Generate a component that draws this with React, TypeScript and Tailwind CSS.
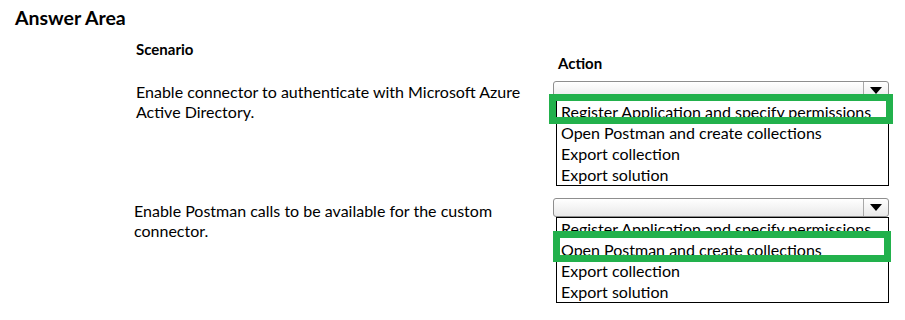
const font = { fontFamily: '"Lato", "Liberation Sans", sans-serif' };

const actions = [
  'Register Application and specify permissions',
  'Open Postman and create collections',
  'Export collection',
  'Export solution',
];

type DropProps = { frame: string };

const ActionDrop = ({ frame }: DropProps) => (
  <div className="relative w-[337px]">
    <div className="flex h-[19px] w-[336px] rounded-[3px] border border-[#8e8e8e] bg-gradient-to-b from-white to-[#e9e9e9]">
      <div className="flex-1" />
      <div className="flex w-[25px] items-center justify-center border-l border-[#a8a8a8]">
        <svg width="12" height="7" viewBox="0 0 12 7">
          <path d="M0 0 H12 L6 7 Z" fill="#000" />
        </svg>
      </div>
    </div>
    <div className="ml-[3px] w-[333px] border border-black bg-white pl-[4px] text-[16px] leading-[21px] text-black">
      {actions.map((a) => (
        <div key={a} className="h-[21px] whitespace-nowrap">{a}</div>
      ))}
    </div>
    <div className={`absolute border-[7px] border-[#22b14c] ${frame}`} />
  </div>
);

export default function App() {
  return (
    <div className="h-[320px] w-[905px] bg-white text-black" style={font}>
      <div className="pl-[15px] pt-[6px] text-[19.5px] font-bold leading-[24px]">Answer Area</div>
      <div className="grid grid-cols-[417px_337px] pl-[136px]">
        <div className="pt-[11px] text-[15px] font-bold leading-[16px]">Scenario</div>
        <div className="pl-[5px] pt-[25px] text-[15px] font-bold leading-[16px]">Action</div>

        <div className="pt-[11px] text-[16px] leading-[20px]">
          Enable connector to authenticate with Microsoft Azure
          <br />
          Active Directory.
        </div>
        <div className="pt-[10px]">
          <ActionDrop frame="left-[-4px] top-[13px] h-[30px] w-[344px]" />
        </div>

        <div className="-ml-[2px] pt-[15px] text-[16px] leading-[20px]">
          Enable Postman calls to be available for the custom
          <br />
          connector.
        </div>
        <div className="pt-[12px]">
          <ActionDrop frame="left-0 top-[33px] h-[31px] w-[338px]" />
        </div>
      </div>
    </div>
  );
}
